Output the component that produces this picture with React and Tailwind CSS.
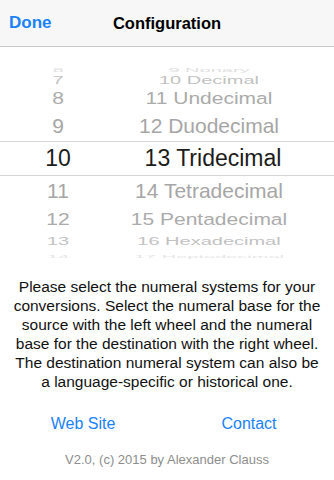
const rows = [
  { l: "8", r: "9 Nonary", h: "h-[10px]", s: "scale-y-[0.25]", c: "text-[#e0e0e0] text-[20px]" },
  { l: "7", r: "10 Decimal", h: "h-[16px]", s: "scale-y-[0.55]", c: "text-[#c2c2c2] text-[20px]" },
  { l: "8", r: "11 Undecimal", h: "h-[25px]", s: "scale-y-[0.8]", c: "text-[#ababab] text-[21px]" },
  { l: "9", r: "12 Duodecimal", h: "h-[30px]", s: "scale-y-[0.93]", c: "text-[#a6a6a6] text-[21px]" },
];

const below = [
  { l: "11", r: "14 Tetradecimal", h: "h-[30px]", s: "scale-y-[0.93]", c: "text-[#a6a6a6] text-[21px]" },
  { l: "12", r: "15 Pentadecimal", h: "h-[25px]", s: "scale-y-[0.8]", c: "text-[#ababab] text-[21px]" },
  { l: "13", r: "16 Hexadecimal", h: "h-[16px]", s: "scale-y-[0.55]", c: "text-[#c2c2c2] text-[20px]" },
  { l: "14", r: "17 Heptadecimal", h: "h-[10px]", s: "scale-y-[0.2]", c: "text-[#e6e6e6] text-[20px]" },
];

const Row = ({ row }) => (
  <div className={`${row.h} grid grid-cols-[116px_186px] items-center overflow-visible ${row.c}`}>
    <span className={`text-center leading-none ${row.s}`}>{row.l}</span>
    <span className={`text-center leading-none whitespace-nowrap ${row.s}`}>{row.r}</span>
  </div>
);

export default function App() {
  return (
    <div className="w-[334px] h-[480px] bg-white overflow-hidden font-['Liberation_Sans',Arial,sans-serif]">
      {/* header */}
      <div className="h-[47px] bg-[#f7f7f7] border-b border-[#c9c9c9] flex items-center relative">
        <span className="pl-[9px] text-[17px] font-semibold text-[#1a82fb]">Done</span>
        <span className="absolute left-0 right-0 text-center text-[16.5px] font-bold text-black pointer-events-none">
          Configuration
        </span>
      </div>

      {/* picker */}
      <div className="pt-[13px] flex flex-col">
        {rows.map((r, i) => (
          <Row key={i} row={r} />
        ))}
        <div className="h-[35px] grid grid-cols-[116px_186px] items-center border-y border-[#d6d6d6] text-[23px] text-[#1c1c1c]">
          <span className="text-center leading-none">10</span>
          <span className="text-center leading-none pl-[8px]">13 Tridecimal</span>
        </div>
        {below.map((r, i) => (
          <Row key={i} row={r} />
        ))}
      </div>

      {/* text */}
      <p className="mt-[20px] text-center text-[15.5px] leading-[19px] text-[#111]">
        Please select the numeral systems for your
        <br />
        conversions. Select the numeral base for the
        <br />
        source with the left wheel and the numeral
        <br />
        base for the destination with the right wheel.
        <br />
        The destination numeral system can also be
        <br />
        a language-specific or historical one.
      </p>

      <div className="mt-[23px] grid grid-cols-[166px_166px] text-[16px] leading-[20px] text-[#1a82fb]">
        <span className="text-center">Web Site</span>
        <span className="text-center">Contact</span>
      </div>

      <p className="mt-[18px] text-center text-[13px] leading-[16px] text-[#8e8e8e]">
        V2.0, (c) 2015 by Alexander Clauss
      </p>
    </div>
  );
}
